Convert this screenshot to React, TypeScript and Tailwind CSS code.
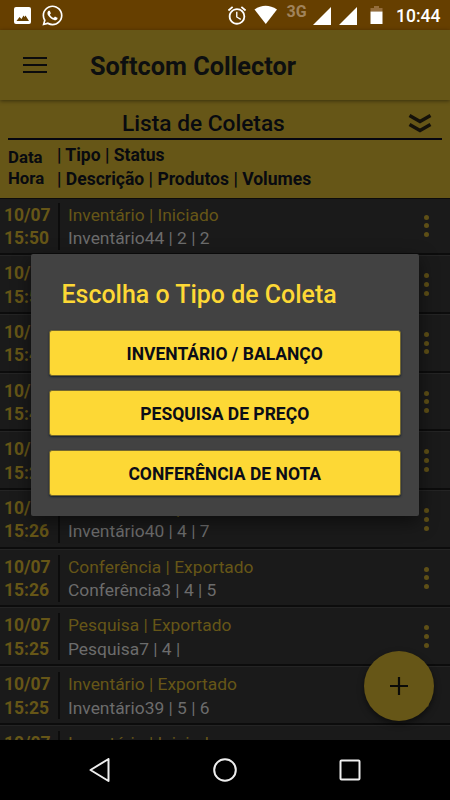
import { FaWhatsapp } from "react-icons/fa";
import { MdAlarm } from "react-icons/md";

interface Collection {
  date: string;
  time: string;
  type: string;
  details: string;
}

const collections: Collection[] = [
  { date: "10/07", time: "15:50", type: "Inventário | Iniciado", details: "Inventário44 | 2 | 2" },
  { date: "10/07", time: "15:50", type: "Inventário | Iniciado", details: "Inventário43 | 1 | 1" },
  { date: "10/07", time: "15:49", type: "Inventário | Exportado", details: "Inventário42 | 3 | 5" },
  { date: "10/07", time: "15:49", type: "Pesquisa | Exportado", details: "Pesquisa8 | 3 |" },
  { date: "10/07", time: "15:27", type: "Inventário | Exportado", details: "Inventário41 | 2 | 4" },
  { date: "10/07", time: "15:26", type: "Inventário | Exportado", details: "Inventário40 | 4 | 7" },
  { date: "10/07", time: "15:26", type: "Conferência | Exportado", details: "Conferência3 | 4 | 5" },
  { date: "10/07", time: "15:25", type: "Pesquisa | Exportado", details: "Pesquisa7 | 4 |" },
  { date: "10/07", time: "15:25", type: "Inventário | Exportado", details: "Inventário39 | 5 | 6" },
  { date: "10/07", time: "15:24", type: "Inventário | Iniciado", details: "Inventário38 | 1 | 1" },
];

const options = ["INVENTÁRIO / BALANÇO", "PESQUISA DE PREÇO", "CONFERÊNCIA DE NOTA"];

const StatusBar = () => (
  <div className="flex h-[30px] shrink-0 items-center justify-between bg-[#663f00] text-white">
    <div className="flex items-center pl-[14px]">
      <svg width="17" height="17" viewBox="0 0 17 17">
        <rect width="17" height="17" rx="2" fill="#fff" />
        <path d="M2.500 14l3-4 2 2 2-3.500 1 1.500 1-1.500L15 14z" fill="#663f00" />
      </svg>
      <FaWhatsapp className="ml-[10px] size-[23px]" />
    </div>
    <svg width="164" height="30" viewBox="225 0 164 30" className="mr-auto ml-[161px] shrink-0">
      <MdAlarm x="226" y="4.500" size="22" />
      <path d="M254.500 9.500Q265.500 2 277 9.500L265.800 24z" fill="#fff" />
      <text x="286.500" y="16.500" className="fill-[#a0835b] font-[Roboto] text-[16px] font-bold">3G</text>
      <path d="M331 7v18h-18zM357 7v18h-18z" fill="#fff" />
      <path d="M374 6h5v2h3.500v3.500h-12v-3.500h3.500z" fill="#946d3c" />
      <path d="M370.500 11.500h12v12.500h-12z" fill="#fff" />
    </svg>
    <span className="w-[54px] pt-px text-[17.500px] leading-[30px] font-medium whitespace-nowrap">10:44</span>
  </div>
);

const Toolbar = () => (
  <div className="relative z-10 flex h-[70px] shrink-0 items-center bg-[#665617] pl-[23px] shadow-[0_1px_4px_rgba(0,0,0,0.45)]">
    <svg width="24" height="16" viewBox="0 0 24 16" stroke="#0b0b0d" strokeWidth="2">
      <path d="M0 1h24M0 8h24M0 15h24" />
    </svg>
    <h1 className="ml-[43px] pt-[3px] text-[25.300px] font-bold whitespace-nowrap text-[#0d0f10]">Softcom Collector</h1>
  </div>
);

const ListHeader = () => (
  <div className="h-[98px] shrink-0 bg-[#665617] px-[8px] pt-[9px] text-[#080a10]">
    <div className="flex h-[31px] items-center border-b-2 border-[#060610]">
      <h2 className="ml-[114px] text-[22.700px] leading-[29px] font-medium whitespace-nowrap">Lista de Coletas</h2>
      <svg width="24" height="22" viewBox="0 0 24 22" className="mr-[10px] mb-[2px] ml-auto" fill="none" stroke="#15120a" strokeWidth="3.500">
        <path d="M1.500 3.500L12 9.500l10.500-6M1.500 12.500L12 18.500l10.500-6" />
      </svg>
    </div>
    <div className="flex font-bold whitespace-nowrap">
      <div className="w-[49px] pt-[7px] text-[16.800px] leading-[20.500px]">
        <p>Data</p>
        <p>Hora</p>
      </div>
      <div className="pt-[4px] text-[17.550px] leading-[23.500px]">
        <p>| Tipo | Status</p>
        <p>| Descrição | Produtos | Volumes</p>
      </div>
    </div>
  </div>
);

const CollectionRow = ({ item }: { item: Collection }) => (
  <li className="flex h-[58.700px] shrink-0 border-t border-b-2 border-t-[#242424] border-b-[#0c0c0c] pl-[4px] whitespace-nowrap">
    <div className="w-[54px] pt-[6px] text-[17.500px] leading-[23.500px] font-bold text-[#665617]">
      <p>{item.date}</p>
      <p>{item.time}</p>
    </div>
    <div className="mt-[5px] h-[47px] w-[2px] bg-[#0c0c0c]" />
    <div className="pt-[6px] pl-[8px] text-[17.400px] leading-[23.500px]">
      <p className="text-[#665617]">{item.type}</p>
      <p className="text-[#6c6c6c]">{item.details}</p>
    </div>
    <div className="mt-[17px] mr-[21px] ml-auto flex flex-col gap-[3.800px]">
      <span className="size-[5px] rounded-full bg-[#5e4f16]" />
      <span className="size-[5px] rounded-full bg-[#5e4f16]" />
      <span className="size-[5px] rounded-full bg-[#5e4f16]" />
    </div>
  </li>
);

const TypeDialog = () => (
  <div className="absolute top-[254px] left-[31px] z-20 h-[262px] w-[387.500px] rounded-[2px] bg-[#424242] px-[17.500px] shadow-[0_6px_18px_rgba(0,0,0,0.5)]">
    <h2 className="h-[76px] pt-[24px] pl-[13px] text-[24.950px] leading-[34px] font-medium whitespace-nowrap text-[#fdd835]">
      Escolha o Tipo de Coleta
    </h2>
    <div className="flex flex-col gap-[14px]">
      {options.map((option) => (
        <button
          key={option}
          className="h-[46px] rounded-[3px] border border-[#75682f] bg-[#fdd835] pt-[2px] text-[17.500px] font-bold text-[#0b0d18] shadow-[0_1px_2px_#14202f]"
        >
          {option}
        </button>
      ))}
    </div>
  </div>
);

const NavBar = () => (
  <div className="flex h-[60px] shrink-0 items-center justify-center gap-[101px] bg-black">
    <svg width="24" height="24" viewBox="0 0 24 24" fill="none" stroke="#eee" strokeWidth="2" strokeLinejoin="round">
      <path d="M20.500 1v22L2.500 12z" />
    </svg>
    <svg width="24" height="24" viewBox="0 0 24 24" fill="none" stroke="#eee" strokeWidth="2">
      <circle cx="12" cy="12" r="10.800" />
    </svg>
    <svg width="24" height="24" viewBox="0 0 24 24" fill="none" stroke="#eee" strokeWidth="2">
      <rect x="2.500" y="2.500" width="19" height="19" rx="1" />
    </svg>
  </div>
);

const App = () => {
  return (
    <div className="relative flex h-[800px] w-[450px] flex-col overflow-hidden bg-[#1a1a1a] font-[Roboto,sans-serif]">
      <StatusBar />
      <Toolbar />
      <ListHeader />
      <div className="min-h-0 flex-1 overflow-hidden border-t border-[#0c0c0c]">
        <ul className="-mt-[2.500px] flex flex-col">
          {collections.map((item, index) => (
            <CollectionRow key={index} item={item} />
          ))}
        </ul>
      </div>
      <button className="absolute top-[651px] left-[364px] flex size-[70px] items-center justify-center rounded-full bg-[#665617] shadow-[0_3px_6px_rgba(0,0,0,0.5)]">
        <svg width="18" height="18" viewBox="0 0 18 18" stroke="#0b0b08" strokeWidth="2.200">
          <path d="M9 0v18M0 9h18" />
        </svg>
      </button>
      <TypeDialog />
      <NavBar />
    </div>
  );
};

export default App;
